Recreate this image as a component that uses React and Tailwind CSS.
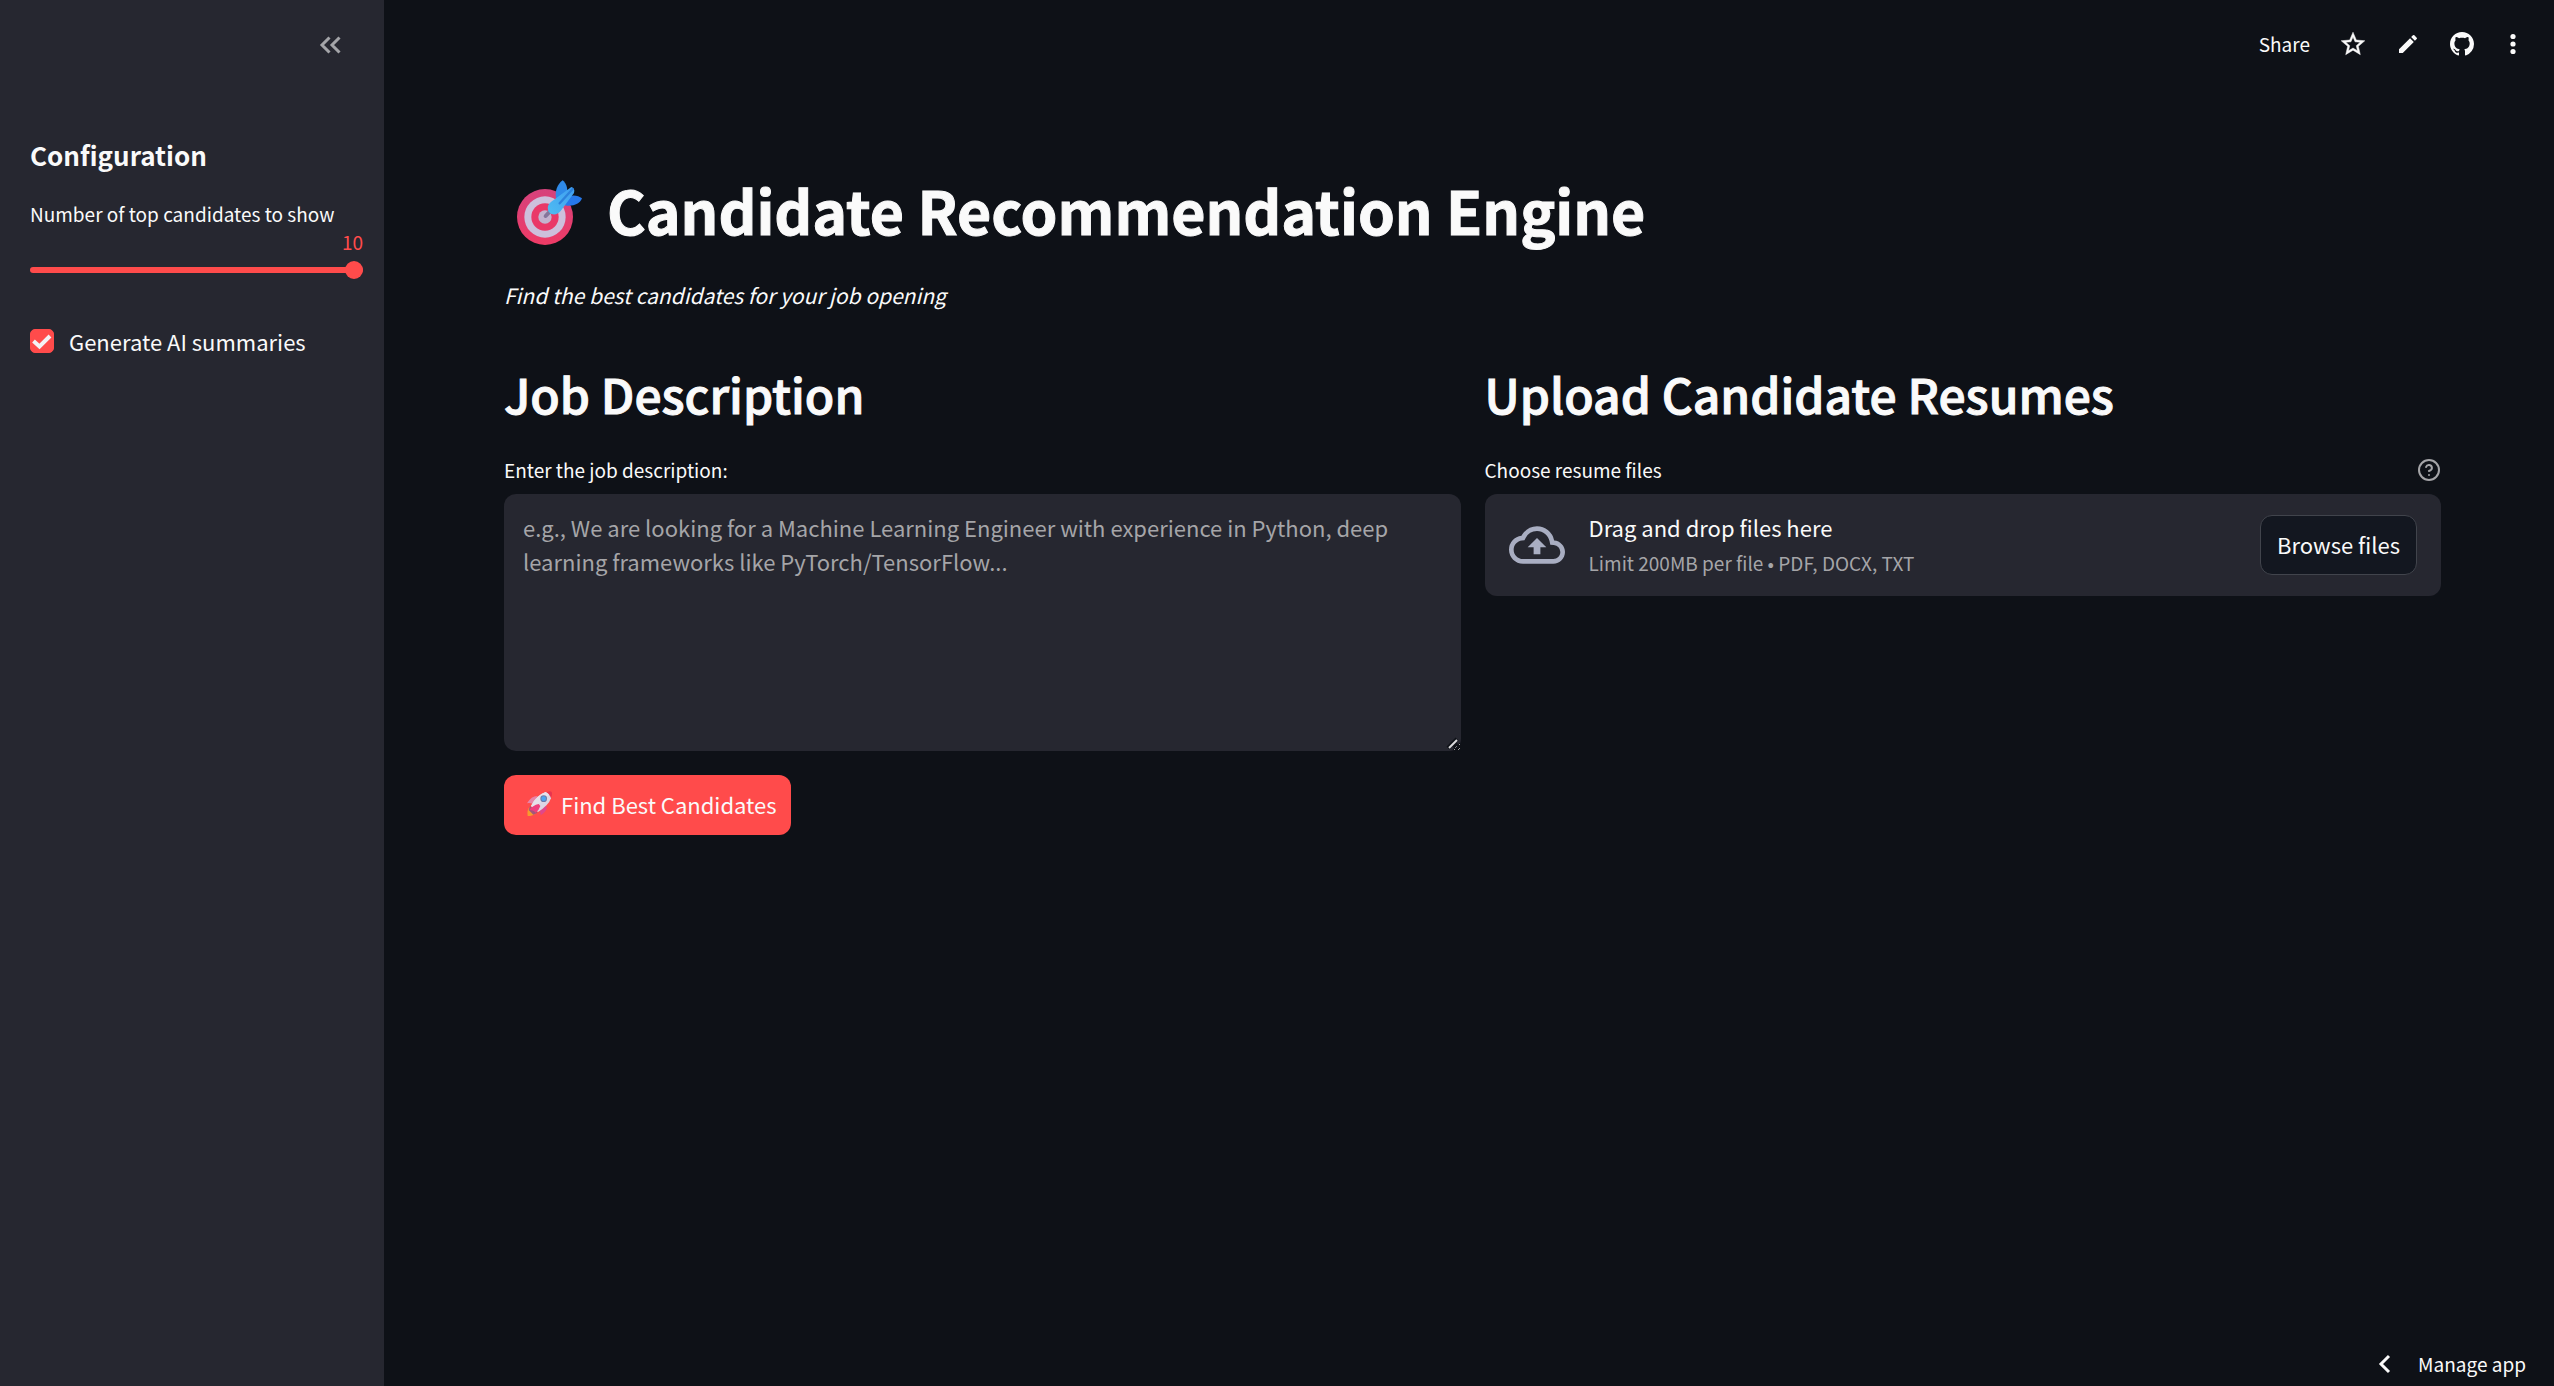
import React, { useState } from "react";

function TargetEmoji() {
  return (
    <svg viewBox="-18 -9 258 240" className="h-20 w-[86px] shrink-0" role="img" aria-label="Target">
      <defs>
        <linearGradient id="ring" x1="0" y1="0" x2="0" y2="1">
          <stop offset="0" stopColor="#d6427c" />
          <stop offset="1" stopColor="#ee3b66" />
        </linearGradient>
        <linearGradient id="dart" x1="1" y1="0" x2="0" y2="1">
          <stop offset="0" stopColor="#3f9df0" />
          <stop offset="1" stopColor="#4fbdf2" />
        </linearGradient>
      </defs>
      <circle cx="105" cy="132" r="84" fill="url(#ring)" />
      <circle cx="105" cy="132" r="62" fill="#cdc0dc" />
      <circle cx="105" cy="132" r="41" fill="#e93868" />
      <circle cx="105" cy="132" r="20" fill="#c3b3cf" />
      <path d="M107 129 L122 113" stroke="#85759b" strokeWidth="12" strokeLinecap="round" />
      <path d="M138 76 C134 54 142 34 158 22 C170 32 176 50 168 70 L160 82 Z" fill="#2f8ae8" />
      <path d="M166 74 C184 64 204 66 216 76 C210 92 192 100 170 98 L154 92 Z" fill="#2678ea" />
      <path
        d="M184 42 Q196 46 192 60 L152 114 Q140 128 124 123 Q110 114 114 99 Q118 88 132 80 Z"
        fill="url(#dart)"
      />
      <path d="M188 48 L149 91" stroke="#2d82dc" strokeWidth="7" strokeLinecap="round" />
    </svg>
  );
}

function RocketEmoji() {
  return (
    <svg viewBox="0 0 108 108" className="size-9 shrink-0" role="img" aria-label="Rocket">
      <path d="M46 30 Q28 30 15 52 Q22 50 34 54 Z" fill="#e884a8" />
      <path d="M74 60 Q76 76 56 88 Q56 76 50 70 Z" fill="#e0478a" />
      <path d="M22 64 Q14 74 17 90 Q34 90 42 80 Z" fill="#f79a2e" />
      <path d="M24 60 L20 72 L34 86 L46 80 Z" fill="#a2557c" />
      <path d="M70 20 Q84 12 89 18 Q92 25 86 38 Z" fill="#e8354f" />
      <path d="M71 18 Q84 26 87 37 Q80 58 48 78 L27 60 Q42 28 71 18 Z" fill="#dcd6e4" />
      <path d="M71 18 Q78 21 82 27 Q60 38 38 70 L27 60 Q42 28 71 18 Z" fill="#e6e0ea" />
      <path d="M50 54 Q32 58 22 72 Q36 72 40 80 Q52 72 55 60 Z" fill="#ee3f7e" />
      <circle cx="65" cy="38" r="10" fill="#6d7ba6" />
      <circle cx="65" cy="38" r="7" fill="#4da3f0" />
    </svg>
  );
}

function Sidebar() {
  const [count, setCount] = useState(10);
  const [summaries, setSummaries] = useState(true);
  return (
    <aside className="w-96 shrink-0 bg-[#262730] pr-[21px] pl-[30px]">
      <div className="flex h-[90px] items-center justify-end pr-[22px]">
        <button type="button" aria-label="Collapse sidebar" className="text-[#a3a4a8]">
          <svg viewBox="0 0 22 18" className="h-[18px] w-[22px]" fill="none" stroke="currentColor" strokeWidth="3">
            <path d="M10.5 1.5 L3 9 L10.5 16.5 M20.5 1.5 L13 9 L20.5 16.5" />
          </svg>
        </button>
      </div>
      <h2 className="mt-[47px] text-[26px] leading-9 font-bold">Configuration</h2>
      <div className="mt-[26px] flex flex-col">
        <label htmlFor="count" className="text-[19px] leading-[30px]">
          Number of top candidates to show
        </label>
        <output htmlFor="count" className="self-end text-[19px] leading-[26px] text-[#ff4b4b]">
          {count}
        </output>
        <input
          id="count"
          type="range"
          min="1"
          max="10"
          value={count}
          onChange={(e) => setCount(Number(e.target.value))}
          className="mt-[6px] h-[18px] w-full appearance-none bg-transparent [&::-webkit-slider-runnable-track]:h-[6px] [&::-webkit-slider-runnable-track]:rounded-full [&::-webkit-slider-runnable-track]:bg-[#ff4b4b] [&::-webkit-slider-thumb]:-mt-[6px] [&::-webkit-slider-thumb]:size-[18px] [&::-webkit-slider-thumb]:appearance-none [&::-webkit-slider-thumb]:rounded-full [&::-webkit-slider-thumb]:bg-[#ff4b4b]"
        />
      </div>
      <label className="mt-[45px] flex items-center gap-[15px] text-[22px] leading-[34px]">
        <span className="grid size-6 shrink-0">
          <input
            type="checkbox"
            checked={summaries}
            onChange={(e) => setSummaries(e.target.checked)}
            className="peer col-start-1 row-start-1 size-6 appearance-none rounded-[5px] border border-[#60616a] checked:border-[#ff4b4b] checked:bg-[#ff4b4b]"
          />
          <svg
            viewBox="0 0 24 24"
            className="pointer-events-none col-start-1 row-start-1 size-6 opacity-0 peer-checked:opacity-100"
            fill="none"
            stroke="#f4f2f5"
            strokeWidth="4"
          >
            <path d="M3.5 12 L9.5 17.5 L20 7" />
          </svg>
        </span>
        Generate AI summaries
      </label>
    </aside>
  );
}

function Toolbar() {
  return (
    <header className="flex h-[88px] items-center justify-end gap-[30px] pr-8">
      <button type="button" className="text-[19px] leading-[30px]">
        Share
      </button>
      <button type="button" aria-label="Favorite">
        <svg viewBox="1 1 22 22" className="size-[26px]" fill="currentColor" stroke="currentColor" strokeWidth="0.4">
          <path d="m22 9.24-7.19-.62L12 2 9.19 8.63 2 9.24l5.46 4.73L5.82 21 12 17.27 18.18 21l-1.63-7.03L22 9.24zM12 15.4l-3.76 2.27 1-4.28-3.32-2.88 4.38-.38L12 6.1l1.71 4.04 4.38.38-3.32 2.88 1 4.28L12 15.4z" />
        </svg>
      </button>
      <button type="button" aria-label="Edit source">
        <svg viewBox="0 0 24 24" className="size-6" fill="currentColor">
          <path d="M3 17.25V21h3.75L17.81 9.94l-3.75-3.75L3 17.25zM20.71 7.04a.996.996 0 0 0 0-1.41l-2.34-2.34a.996.996 0 0 0-1.41 0l-1.83 1.83 3.75 3.75 1.83-1.83z" />
        </svg>
      </button>
      <a href="#github" aria-label="View on GitHub">
        <svg viewBox="0 0 16 16" className="size-6" fill="currentColor">
          <path d="M8 0C3.58 0 0 3.58 0 8c0 3.54 2.29 6.53 5.47 7.59.4.07.55-.17.55-.38 0-.19-.01-.82-.01-1.49-2.01.37-2.53-.49-2.69-.94-.09-.23-.48-.94-.82-1.13-.28-.15-.68-.52-.01-.53.63-.01 1.08.58 1.23.82.72 1.21 1.87.87 2.33.66.07-.52.28-.87.51-1.07-1.78-.2-3.64-.89-3.64-3.95 0-.87.31-1.59.82-2.15-.08-.2-.36-1.02.08-2.12 0 0 .67-.21 2.2.82.64-.18 1.32-.27 2-.27s1.36.09 2 .27c1.53-1.04 2.2-.82 2.2-.82.44 1.1.16 1.92.08 2.12.51.56.82 1.27.82 2.15 0 3.07-1.87 3.75-3.65 3.95.29.25.54.73.54 1.48 0 1.07-.01 1.93-.01 2.2 0 .21.15.46.55.38A8.01 8.01 0 0 0 16 8c0-4.42-3.58-8-8-8z" />
        </svg>
      </a>
      <button type="button" aria-label="More options">
        <svg viewBox="0 0 18 24" className="h-6 w-[18px]" fill="currentColor">
          <circle cx="9" cy="4.5" r="2.6" />
          <circle cx="9" cy="12" r="2.6" />
          <circle cx="9" cy="19.5" r="2.6" />
        </svg>
      </button>
    </header>
  );
}

function JobDescription() {
  return (
    <section className="flex min-w-0 flex-col">
      <h2 className="text-5xl leading-[64px] font-medium [-webkit-text-stroke:1px_currentColor]">Job Description</h2>
      <label htmlFor="job" className="mt-[30px] text-[19px] leading-[30px]">
        Enter the job description:
      </label>
      <div className="relative mt-[9px]">
        <textarea
          id="job"
          placeholder="e.g., We are looking for a Machine Learning Engineer with experience in Python, deep learning frameworks like PyTorch/TensorFlow..."
          className="block h-[257px] w-full resize-y rounded-xl bg-[#262730] px-[19px] py-4 text-[22px] leading-[34px] placeholder:text-[#a5a5a8] placeholder:opacity-100"
        />
        <svg viewBox="0 0 16 16" className="pointer-events-none absolute right-0 bottom-0 size-4" fill="none" aria-hidden="true">
          <path d="M3 13 L12 4 M9 13 L13 9" stroke="#0e1117" strokeWidth="4" />
          <path d="M4 13 L12 5" stroke="#dcdcde" strokeWidth="2" />
          <path d="M10 13 L12 11" stroke="#77787e" strokeWidth="1" />
        </svg>
      </div>
    </section>
  );
}

function UploadResumes() {
  return (
    <section className="flex min-w-0 flex-col">
      <h2 className="text-5xl leading-[64px] font-medium [-webkit-text-stroke:1px_currentColor]">
        Upload Candidate Resumes
      </h2>
      <div className="mt-[30px] flex items-center justify-between">
        <span id="files-label" className="text-[19px] leading-[30px]">
          Choose resume files
        </span>
        <button type="button" aria-label="Help" className="text-[#a5a5a8]">
          <svg
            viewBox="0 0 24 24"
            className="size-6"
            fill="none"
            stroke="currentColor"
            strokeWidth="2"
            strokeLinecap="round"
            strokeLinejoin="round"
          >
            <circle cx="12" cy="12" r="10" />
            <path d="M9.09 9a3 3 0 0 1 5.83 1c0 2-3 3-3 3" />
            <path d="M12 17h.01" />
          </svg>
        </button>
      </div>
      <div
        role="group"
        aria-labelledby="files-label"
        className="mt-[9px] flex h-[102px] items-center gap-6 rounded-xl bg-[#262730] px-6"
      >
        <svg viewBox="0 0 24 24" className="size-14 shrink-0 text-[#a9aec2]" fill="currentColor" aria-hidden="true">
          <path d="M19.35 10.04A7.49 7.49 0 0 0 12 4C9.11 4 6.6 5.64 5.35 8.04A5.994 5.994 0 0 0 0 14c0 3.31 2.69 6 6 6h13c2.76 0 5-2.24 5-5 0-2.64-2.05-4.78-4.65-4.96zM19 18H6c-2.21 0-4-1.79-4-4 0-2.05 1.53-3.76 3.56-3.97l1.07-.11.5-.95A5.469 5.469 0 0 1 12 6c2.62 0 4.88 1.86 5.39 4.43l.3 1.5 1.53.11A2.98 2.98 0 0 1 22 15c0 1.65-1.35 3-3 3zM8 13h2.55v3h2.9v-3H16l-4-4z" />
        </svg>
        <div className="flex min-w-0 flex-1 flex-col gap-1 pb-[2px]">
          <span className="text-[22px] leading-[34px]">Drag and drop files here</span>
          <span className="text-[19px] leading-[30px] text-[#a5a5a8]">Limit 200MB per file • PDF, DOCX, TXT</span>
        </div>
        <button
          type="button"
          className="flex h-[60px] items-center rounded-xl border border-[#41444c] bg-[#131720] px-4 pb-[2px] text-[22px] leading-[34px]"
        >
          Browse files
        </button>
      </div>
    </section>
  );
}

export default function App() {
  return (
    <div className="flex min-h-screen bg-[#0e1117] font-['Noto_Sans_CJK_JP','Noto_Sans',sans-serif] text-[#fafafa]">
      <Sidebar />
      <div className="flex min-w-0 flex-1 flex-col">
        <Toolbar />
        <main className="pt-[82px] pr-[113px] pl-[120px]">
          <h1 className="flex items-center gap-[17px] text-[59px] leading-[80px] font-bold [-webkit-text-stroke:1px_currentColor]">
            <TargetEmoji />
            Candidate Recommendation Engine
          </h1>
          <p className="mt-[27px] text-[21px] leading-9 italic">Find the best candidates for your job opening</p>
          <div className="mt-12 grid grid-cols-2 items-start gap-6">
            <JobDescription />
            <UploadResumes />
          </div>
          <button
            type="button"
            className="mt-6 flex h-[60px] items-center gap-[3px] rounded-xl bg-[#ff4b4b] pr-[14px] pb-[2px] pl-[18px] text-[22px] leading-[34px]"
          >
            <RocketEmoji />
            Find Best Candidates
          </button>
        </main>
        <footer className="mt-auto flex justify-end pr-7 pb-[7px]">
          <button type="button" className="flex items-center gap-[22px] text-[19px] leading-[30px]">
            <svg viewBox="0 0 24 24" className="size-6" fill="none" stroke="currentColor" strokeWidth="3">
              <path d="M17 4 L9 12 L17 20" />
            </svg>
            Manage app
          </button>
        </footer>
      </div>
    </div>
  );
}
